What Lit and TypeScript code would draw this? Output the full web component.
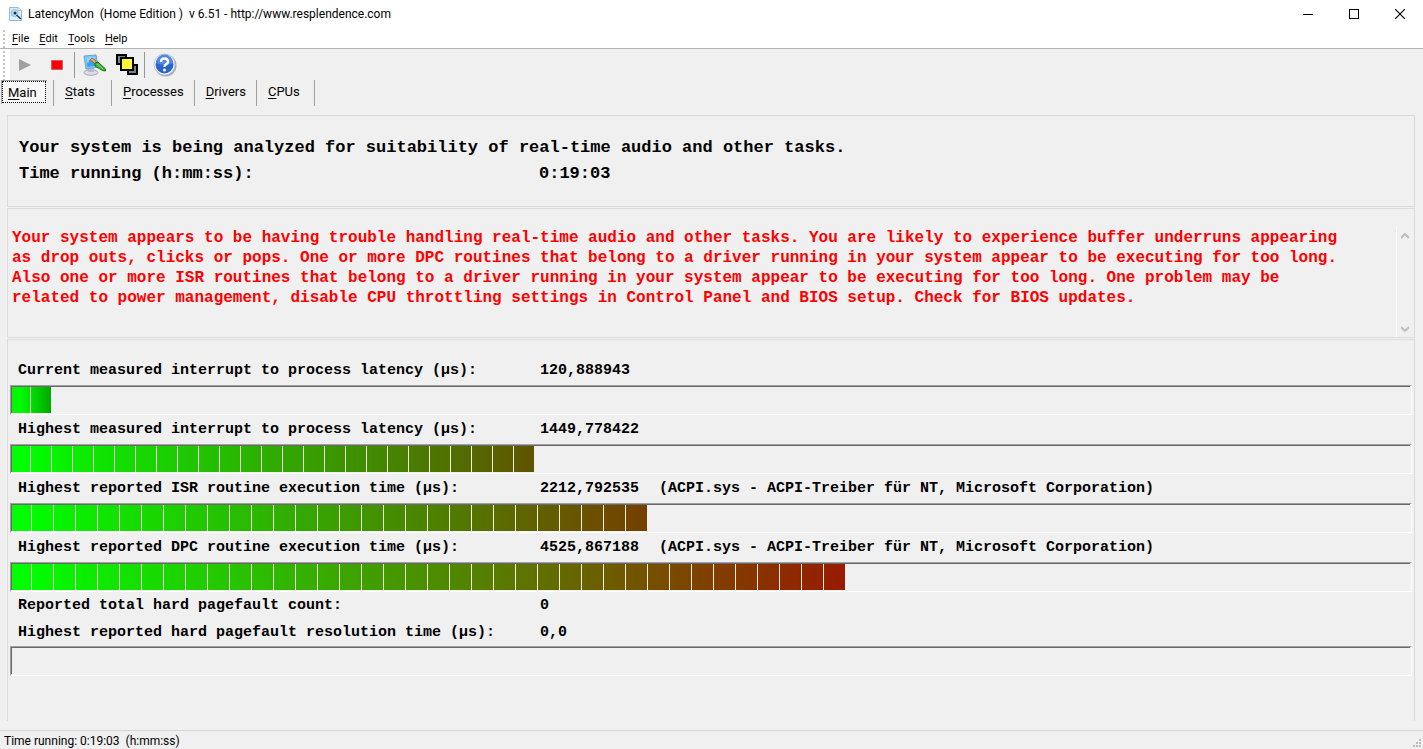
import { LitElement, html, css, svg } from "lit";
import { customElement, property } from "lit/decorators.js";
import { styleMap } from "lit/directives/style-map.js";

@customElement("latency-bar")
class LatencyBar extends LitElement {
  @property({ type: Number }) segments = 0;
  @property({ type: Number }) pitch = 22;
  @property() from = "#00ff00";
  @property() to = "#00ff00";

  static styles = css`
    :host { display: block; }
    .track {
      box-sizing: border-box;
      height: 30px;
      padding: 0 1px 1px 0;
      border-style: solid;
      border-width: 1px;
      border-color: #a0a0a0 #fff #fff #a0a0a0;
    }
    .inner {
      height: 100%;
      box-sizing: border-box;
      border-style: solid;
      border-width: 1px 0 0 1px;
      border-color: #696969;
    }
    .fill { height: 100%; display: flex; overflow: hidden; }
    .segment { flex: none; box-sizing: border-box; border-right: 1px solid #f0f0e0; }
    .segment:last-child { border-right: 0; }
  `;

  render() {
    const first = this.pitch - 2;
    const width = this.segments ? first + (this.segments - 1) * this.pitch - 1 : 0;
    return html`<div class="track"><div class="inner">
      <div class="fill" style=${styleMap({
        width: `${width}px`,
        background: `linear-gradient(to right, ${this.from} 10px, ${this.to})`,
      })}>
        ${Array.from({ length: this.segments }, (_, i) => html`<span class="segment"
          style=${styleMap({ width: `${i ? this.pitch : first}px` })}></span>`)}
      </div></div></div>`;
  }
}

const rows = [
  { label: "Current measured interrupt to process latency (µs):", value: "120,888943", note: "", segments: 2, pitch: 21, from: "#00f800", to: "#00a800" },
  { label: "Highest measured interrupt to process latency (µs):", value: "1449,778422", note: "", segments: 25, pitch: 21, from: "#00ff00", to: "#605400" },
  { label: "Highest reported ISR routine execution time (µs):", value: "2212,792535", note: "(ACPI.sys - ACPI-Treiber für NT, Microsoft Corporation)", segments: 29, pitch: 22, from: "#00ff00", to: "#753f00" },
  { label: "Highest reported DPC routine execution time (µs):", value: "4525,867188", note: "(ACPI.sys - ACPI-Treiber für NT, Microsoft Corporation)", segments: 38, pitch: 22, from: "#00ff00", to: "#991a00" },
];

const warning = [
  "Your system appears to be having trouble handling real-time audio and other tasks. You are likely to experience buffer underruns appearing",
  "as drop outs, clicks or pops. One or more DPC routines that belong to a driver running in your system appear to be executing for too long.",
  "Also one or more ISR routines that belong to a driver running in your system appear to be executing for too long. One problem may be",
  "related to power management, disable CPU throttling settings in Control Panel and BIOS setup. Check for BIOS updates.",
];

const stroke = (d: string) => svg`<path d=${d} fill="none" stroke="#000" shape-rendering="crispEdges"/>`;

@customElement("app-root")
class AppRoot extends LitElement {
  static styles = css`
    :host {
      display: flex;
      flex-direction: column;
      min-height: 100vh;
      background: #f0f0f0;
      color: #000;
      font: 12px/16px Roboto, "Open Sans", sans-serif;
    }
    button { font: inherit; color: inherit; background: none; border: 0; padding: 0; margin: 0; }
    svg { display: block; flex: none; }
    u { text-decoration: underline; text-underline-offset: 2px; }
    .title { display: flex; align-items: center; height: 28px; padding-left: 8px; background: #fff; }
    h1 { flex: 1; margin: 0 0 0 5px; font: inherit; white-space: pre; }
    .window { width: 46px; height: 28px; display: grid; place-items: center; }
    .menu { display: flex; align-items: center; height: 20px; background: #fff; border-bottom: 1px solid #b4b4b4; gap: 10px; }
    .menu button { padding-top: 2px; font-size: 11px; }
    .handle { align-self: stretch; display: flex; width: 10px; background: #fff; }
    .menu .handle { margin-right: -8px; }
    .grip { width: 2px; margin-left: 3px; background: repeating-linear-gradient(#fff 0 2px, #c4c4c4 2px 4px); }
    .toolbar { display: flex; align-items: center; height: 31px; }
    .tool { height: 26px; display: grid; place-items: center; }
    .play { width: 30px; }
    .stop { width: 34px; }
    .wizard, .help { padding: 0 8px; }
    .windows { padding: 0 6px 0 1px; }
    .rule { width: 1px; height: 26px; background: #969696; }
    .tabs { display: flex; height: 26px; font-size: 13px; line-height: 24px; }
    .tab { box-sizing: border-box; min-width: 58px; border-right: 1px solid #a0a0a0; padding: 0 10px 2px 11px; text-align: left; }
    .tab.active { min-width: 54px; padding: 0 6px 2px 1px; }
    .face { display: block; height: 24px; box-sizing: border-box; border: 1px solid #a0a0a0; border-width: 1px 0 0 1px; padding-right: 1px; }
    .focus { display: block; height: 22px; line-height: 22px; box-sizing: border-box; border: 1px dotted #000; padding-left: 5px; background: #f8f8f8; }
    main { flex: 1; display: flex; flex-direction: column; gap: 1px; padding: 9px 8px 9px 7px; }
    section { border: 1px solid #dcdcdc; font-family: "Liberation Mono", monospace; font-weight: 700; }
    .summary { font-size: 17px; line-height: 26px; padding: 19px 11px; }
    .pair { display: flex; white-space: pre; }
    .summary .key { width: 520px; }
    .notice { display: flex; padding-top: 18px; height: 110px; color: #f00; font-size: 16px; line-height: 20px; }
    .notice p { flex: 1; margin: 1px 0 0 4px; white-space: pre; min-width: 0; }
    .scroll { width: 18px; border-left: 1px solid #fff; display: flex; flex-direction: column; justify-content: space-between; align-items: center; padding: 6px 2px 5px 0; box-sizing: border-box; }
    .readings { flex: 1; padding: 16px 2px 0; border-bottom: 0; font-size: 15px; line-height: 29px; }
    .readings .pair { padding-left: 8px; }
    .readings .key { width: 522px; }
    .readings .value { width: 119px; }
    .faults { line-height: 27px; }
    .status { display: flex; justify-content: space-between; border-top: 1px solid #d7d7d7; height: 18px; padding-left: 4px; line-height: 20px; white-space: pre; }
    .status svg { align-self: flex-end; }
  `;

  render() {
    return html`
      <header class="title">
        <svg width="15" height="16" viewBox="0 0 15 16"><path d="M1.500 1.500H10l3.500 3V14.500H1.500z" fill="#d9efff" stroke="#8abbe0"/><path d="M10 1.500v3h3" fill="#fff" stroke="#a6bdcc"/><circle cx="6.500" cy="7" r="3.500" fill="#b4e0f8" stroke="#9fb9c8"/><path d="M8.500 9l4.500 4" stroke="#333" stroke-width="1.500"/><circle cx="7" cy="7" r="1.500" fill="#234"/></svg>
        <h1>LatencyMon  (Home Edition )  v 6.51 - http://www.resplendence.com</h1>
        <button class="window" aria-label="Minimize"><svg width="10" height="10">${stroke("M0 5.500H10")}</svg></button>
        <button class="window" aria-label="Maximize"><svg width="10" height="10">${stroke("M.5 .5H9.500V9.500H.5z")}</svg></button>
        <button class="window" aria-label="Close"><svg width="10" height="10"><path d="M0 0L10 10M10 0L0 10" stroke="#000" stroke-width="1.200"/></svg></button>
      </header>
      <nav class="menu"><span class="handle"><span class="grip"></span></span>
        <button><u>F</u>ile</button><button><u>E</u>dit</button><button><u>T</u>ools</button><button><u>H</u>elp</button>
      </nav>
      <div class="toolbar"><span class="handle"><span class="grip"></span></span>
        <button class="tool play" aria-label="Start"><svg width="12" height="12"><path d="M0 0L12 6L0 12z" fill="#a0a0a0"/></svg></button>
        <button class="tool stop" aria-label="Stop"><svg width="12" height="10"><path d="M.5 .5h11v9H.5z" fill="#f00" stroke="#d06060"/></svg></button>
        <span class="rule"></span>
        <button class="tool wizard" aria-label="Options"><svg width="24" height="22" viewBox="0 0 24 22">
          <ellipse cx="8" cy="18.500" rx="7" ry="2.800" fill="#dcdde8" stroke="#a6a8ba"/>
          <path d="M5 13l6 1v4H5z" fill="#b9bbca"/>
          <path d="M1 2L13 1l2 12L3 15z" fill="#8cc6f2" stroke="#6d9fd0"/>
          <path d="M3 3.500L12 2.500l1.500 9L4.500 13z" fill="#36a3ee"/><path d="M3 3.500L12 2.500l.5 3L4 9z" fill="#8ad7ff"/>
          <path d="M6 7l3-3 3 2 2 3-2 1-3-3z" fill="#edb434" stroke="#745" stroke-width=".7"/>
          <path d="M12 9l3-1 7.500 7v2l-3-.5-7.500-4.500z" fill="#3ab23a" stroke="#17701b"/><path d="M14 10l6 5" stroke="#8ae07c"/></svg></button>
        <button class="tool windows" aria-label="Windows"><svg width="22" height="22" viewBox="0 0 22 22" shape-rendering="crispEdges">
          <defs><pattern id="dither" width="4" height="4" patternUnits="userSpaceOnUse"><path d="M0 0h4v4H0z" fill="#ff0"/><path d="M0 0h2v2H0zM2 2h2v2H2z" fill="#fff36a"/></pattern></defs>
          <path d="M1 1h9v9H1zM12 11h9v9h-9z" fill="#808080" stroke="#000" stroke-width="2"/>
          <path d="M5 4h12v12H5z" fill="url(#dither)" stroke="#000" stroke-width="2"/></svg></button>
        <span class="rule"></span>
        <button class="tool help" aria-label="Help"><svg width="24" height="24" viewBox="0 0 24 24">
          <circle cx="12.500" cy="12.500" r="11" fill="#a3a9b5"/><circle cx="11.500" cy="11.500" r="10.500" fill="#fff" stroke="#b6c4dd"/>
          <circle cx="11.500" cy="11.500" r="9" fill="#2b63cd"/><path d="M3 10a8.500 8.500 0 0 1 17 0q-8 4-17 0z" fill="#5488df"/>
          <path d="M8 9q0-3.500 3.500-3.500T15 8.800q0 1.700-2 2.600-1.500.8-1.500 2.600" fill="none" stroke="#fff" stroke-width="2.400"/><circle cx="11.500" cy="17" r="1.500" fill="#fff"/></svg></button>
      </div>
      <nav class="tabs">
        <button class="tab active"><span class="face"><span class="focus"><u>M</u>ain</span></span></button>
        <button class="tab"><u>S</u>tats</button><button class="tab"><u>P</u>rocesses</button>
        <button class="tab"><u>D</u>rivers</button><button class="tab"><u>C</u>PUs</button>
      </nav>
      <main>
        <section class="summary">
          <div>Your system is being analyzed for suitability of real-time audio and other tasks.</div>
          <div class="pair"><span class="key">Time running (h:mm:ss):</span><span>0:19:03</span></div>
        </section>
        <section class="notice">
          <p>${warning.join("\n")}</p>
          <div class="scroll">
            <svg width="8" height="6"><path d="M0 5L4 1L8 5" fill="none" stroke="#bcbcbc" stroke-width="2"/></svg>
            <svg width="8" height="6"><path d="M0 1L4 5L8 1" fill="none" stroke="#bcbcbc" stroke-width="2"/></svg>
          </div>
        </section>
        <section class="readings">
          ${rows.map((r) => html`
            <div class="pair"><span class="key">${r.label}</span><span class="value">${r.value}</span><span>${r.note}</span></div>
            <latency-bar .segments=${r.segments} .pitch=${r.pitch} .from=${r.from} .to=${r.to}></latency-bar>`)}
          <div class="faults">
            <div class="pair"><span class="key">Reported total hard pagefault count:</span><span>0</span></div>
            <div class="pair"><span class="key">Highest reported hard pagefault resolution time (µs):</span><span>0,0</span></div>
          </div>
          <latency-bar></latency-bar>
        </section>
      </main>
      <footer class="status"><span>Time running: 0:19:03  (h:mm:ss)</span>
        <svg width="12" height="10"><path d="M8 0h2v2H8zM5 3h2v2H5zM8 3h2v2H8zM2 6h2v2H2zM5 6h2v2H5zM8 6h2v2H8z" fill="#bcbcbc"/></svg>
      </footer>
    `;
  }
}
